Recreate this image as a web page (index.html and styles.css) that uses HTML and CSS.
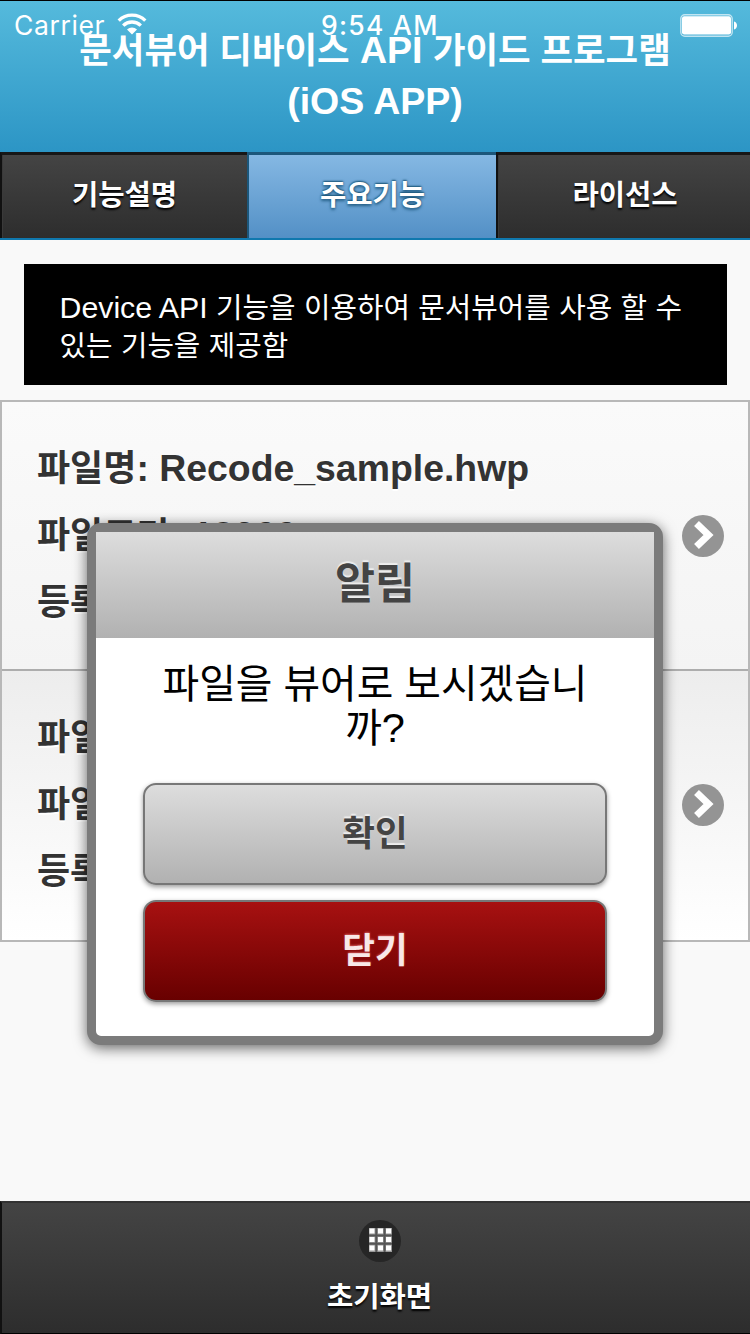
FILE: index.html
```html
<!DOCTYPE html>
<html lang="ko">
<head>
<meta charset="utf-8">
<title>문서뷰어</title>
<link rel="stylesheet" href="styles.css">
</head>
<body>
<div class="page">
  <header class="header">
    <h1 class="title"><span class="ko">문서뷰어 디바이스</span> API <span class="ko">가이드 프로그램</span><br>(iOS APP)</h1>
  </header>
  <div class="status">
    <span class="carrier">Carrier</span>
    <svg class="wifi" viewBox="0 0 30 22" width="30" height="22"><g fill="none" stroke="#fff" stroke-width="3.4"><path d="M1.7 7.6a19 19 0 0 1 26.6 0"/><path d="M6.2 12.6a12.6 12.6 0 0 1 17.6 0"/></g><path d="M10 16.4a7.2 7.2 0 0 1 10 0l-5 5z" fill="#fff"/></svg>
    <span class="clock">9:54 AM</span>
    <svg class="battery" viewBox="0 0 58 23" width="58" height="23"><rect x=".8" y=".8" width="51.4" height="21.4" rx="4" fill="none" stroke="#fff" stroke-opacity=".65" stroke-width="1.4"/><rect x="2" y="2.3" width="49" height="18.2" rx="2.2" fill="#fff"/><path d="M54 7.5c4 1 4 7 0 8z" fill="#fff"/></svg>
  </div>
  <nav class="tabs">
    <a class="tab">기능설명</a>
    <a class="tab tab-active">주요기능</a>
    <a class="tab">라이선스</a>
  </nav>
  <main class="content">
    <p class="info">Device API <span class="ko">기능을 이용하여 문서뷰어를 사용 할 수<br>있는 기능을 제공함</span></p>
    <ul class="list">
      <li class="item">
        <div class="rows">
          <div><span class="ko">파일명</span>: Recode_sample.hwp</div>
          <div><span class="ko">파일크기</span>: 13066</div>
          <div><span class="ko">등록일</span></div>
        </div>
        <svg class="arrow" viewBox="0 0 42 42" width="42" height="42"><circle cx="21" cy="21" r="21" fill="#949494"/><path d="M14.500 8.500l12 11.500-12 11.500" fill="none" stroke="#fff" stroke-width="7"/></svg>
      </li>
      <li class="item item-pressed">
        <div class="rows">
          <div><span class="ko">파일명</span></div>
          <div><span class="ko">파일크기</span></div>
          <div><span class="ko">등록일</span></div>
        </div>
        <svg class="arrow" viewBox="0 0 42 42" width="42" height="42"><circle cx="21" cy="21" r="21" fill="#949494"/><path d="M14.500 8.500l12 11.500-12 11.500" fill="none" stroke="#fff" stroke-width="7"/></svg>
      </li>
    </ul>
  </main>
  <footer class="footer">
    <svg class="grid" viewBox="0 0 42 42" width="42" height="42"><circle cx="21" cy="21" r="21" fill="#262626"/><g fill="#999"><rect x="10" y="8" width="23" height="24"/></g><g fill="#fff"><rect x="10.500" y="8.500" width="5" height="5"/><rect x="19" y="8.500" width="5" height="5"/><rect x="27" y="8.500" width="5" height="5"/><rect x="10.500" y="17" width="5" height="5"/><rect x="19" y="17" width="5" height="5"/><rect x="27" y="17" width="5" height="5"/><rect x="10.500" y="25.500" width="5" height="5"/><rect x="19" y="25.500" width="5" height="5"/><rect x="27" y="25.500" width="5" height="5"/></g><path d="M17.300 8v24M25.600 8v24M10 15.500h23M10 23.800h23" stroke="#555" stroke-width="2"/></svg>
    <span class="home">초기화면</span>
  </footer>
  <section class="dialog">
    <h2 class="dialog-title">알림</h2>
    <div class="dialog-body">
      <p class="message"><span class="ko">파일을 뷰어로 보시겠습니<br>까</span>?</p>
      <button class="button">확인</button>
      <button class="button button-close">닫기</button>
    </div>
  </section>
</div>
</body>
</html>
```
FILE: styles.css
```css
* { box-sizing: border-box; }
body, h1, h2, p, ul { margin: 0; padding: 0; }
body { font-family: "Liberation Sans", "Noto Sans CJK KR", sans-serif; }
.page { position: relative; width: 750px; height: 1334px; overflow: hidden; display: flex; flex-direction: column; background: #f9f9f9; }

.header { height: 152px; border-top: 1px solid #000; padding-top: 24px; background: linear-gradient(#55badc, #2c95c5); }
.title { font-size: 37.500px; line-height: 50px; color: #fff; text-align: center; white-space: nowrap; }
.title .ko { font-size: 35.400px; }

.status { position: absolute; left: 0; right: 0; top: 13px; height: 24px; color: #fff; font: 26.500px/25px Inter, sans-serif; }
.carrier { position: absolute; left: 14px; top: 0; letter-spacing: .6px; }
.wifi { position: absolute; left: 117px; top: 0; }
.clock { position: absolute; left: 321px; top: 0; white-space: nowrap; letter-spacing: 1.300px; font-weight: 500; }
.battery { position: absolute; left: 680px; top: 1px; }

.tabs { height: 88px; display: grid; grid-template-columns: 247px 249px 254px; border-bottom: 2px solid #0f78ae; }
.tab { display: flex; align-items: center; justify-content: center; padding-bottom: 8px; border-top: 3px solid #171717; border-left: 2px solid #111; background: linear-gradient(#444, #2d2d2d); color: #fff; font-size: 28.600px; font-weight: bold; text-shadow: 0 2px 2px #000; box-shadow: inset 1px 0 #3a3a3a; }
.tab:last-child { padding-left: 2px; }
.tab-active { border-color: #1c577b; background: linear-gradient(#85b8e3, #5390c6); text-shadow: 0 -1px 2px #145072, 0 2px 3px #245f86; box-shadow: none; }

.content { flex: 1; }
.info { margin: 24px 23.500px 15px; height: 121px; padding: 25px 36px 0; background: #000; color: #fff; font-size: 30.300px; line-height: 37px; white-space: nowrap; }
.info .ko { font-size: 28.800px; word-spacing: .4px; }

.list { list-style: none; border: 2px solid #b8b8b8; }
.item { height: 267px; display: flex; justify-content: space-between; align-items: center; padding: 0 24px 0 35px; background: linear-gradient(#fafafa, #f4f4f4); }
.item-pressed { height: 271px; padding-bottom: 2px; border-top: 2px solid #adadad; background: linear-gradient(#ededed, #fff); }
.rows { color: #333; font-size: 37.400px; font-weight: bold; line-height: 66px; text-shadow: 0 2px 0 #fff; white-space: nowrap; }
.rows .ko { font-size: 36px; }
.arrow { flex: none; }

.footer { height: 133px; display: flex; flex-direction: column; align-items: center; padding: 17px 0 0 7px; border-top: 2px solid #333; border-bottom: 1px solid #000; border-left: 2px solid #111; background: linear-gradient(#444, #2d2d2d); }
.home { margin-top: 14px; color: #fff; font-size: 28.600px; line-height: 42px; font-weight: bold; text-shadow: 0 2px 2px #000; }

.dialog { position: absolute; left: 87px; top: 523px; width: 576px; height: 522px; border: 9px solid #7b7b7b; border-radius: 14px; background: #fff; box-shadow: 0 3px 14px rgba(0, 0, 0, .6); }
.dialog-title { height: 106px; background: linear-gradient(#ddd, #b1b1b1); color: #444; font-size: 43.500px; line-height: 104px; text-align: center; text-shadow: 0 -2px 1px #eee; }
.dialog-body { padding: 24px 47px 0; display: flex; flex-direction: column; }
.message { font-size: 41.500px; line-height: 44px; text-align: center; white-space: nowrap; color: #000; }
.message .ko { font-size: 39.800px; }
.button { height: 102px; margin: 33px 0 0; padding: 0 0 7px; border: 2px solid #777; border-radius: 13px; background: linear-gradient(#ddd, #b1b1b1); box-shadow: 0 2px 5px rgba(0, 0, 0, .4); color: #444; font: bold 35.500px "Liberation Sans", "Noto Sans CJK KR", sans-serif; text-shadow: 0 -2px 1px #eee; }
.button-close { margin-top: 15px; background: linear-gradient(#a71111, #680000); color: #f8e8e8; text-shadow: 0 -1px 2px #c55; }
```
